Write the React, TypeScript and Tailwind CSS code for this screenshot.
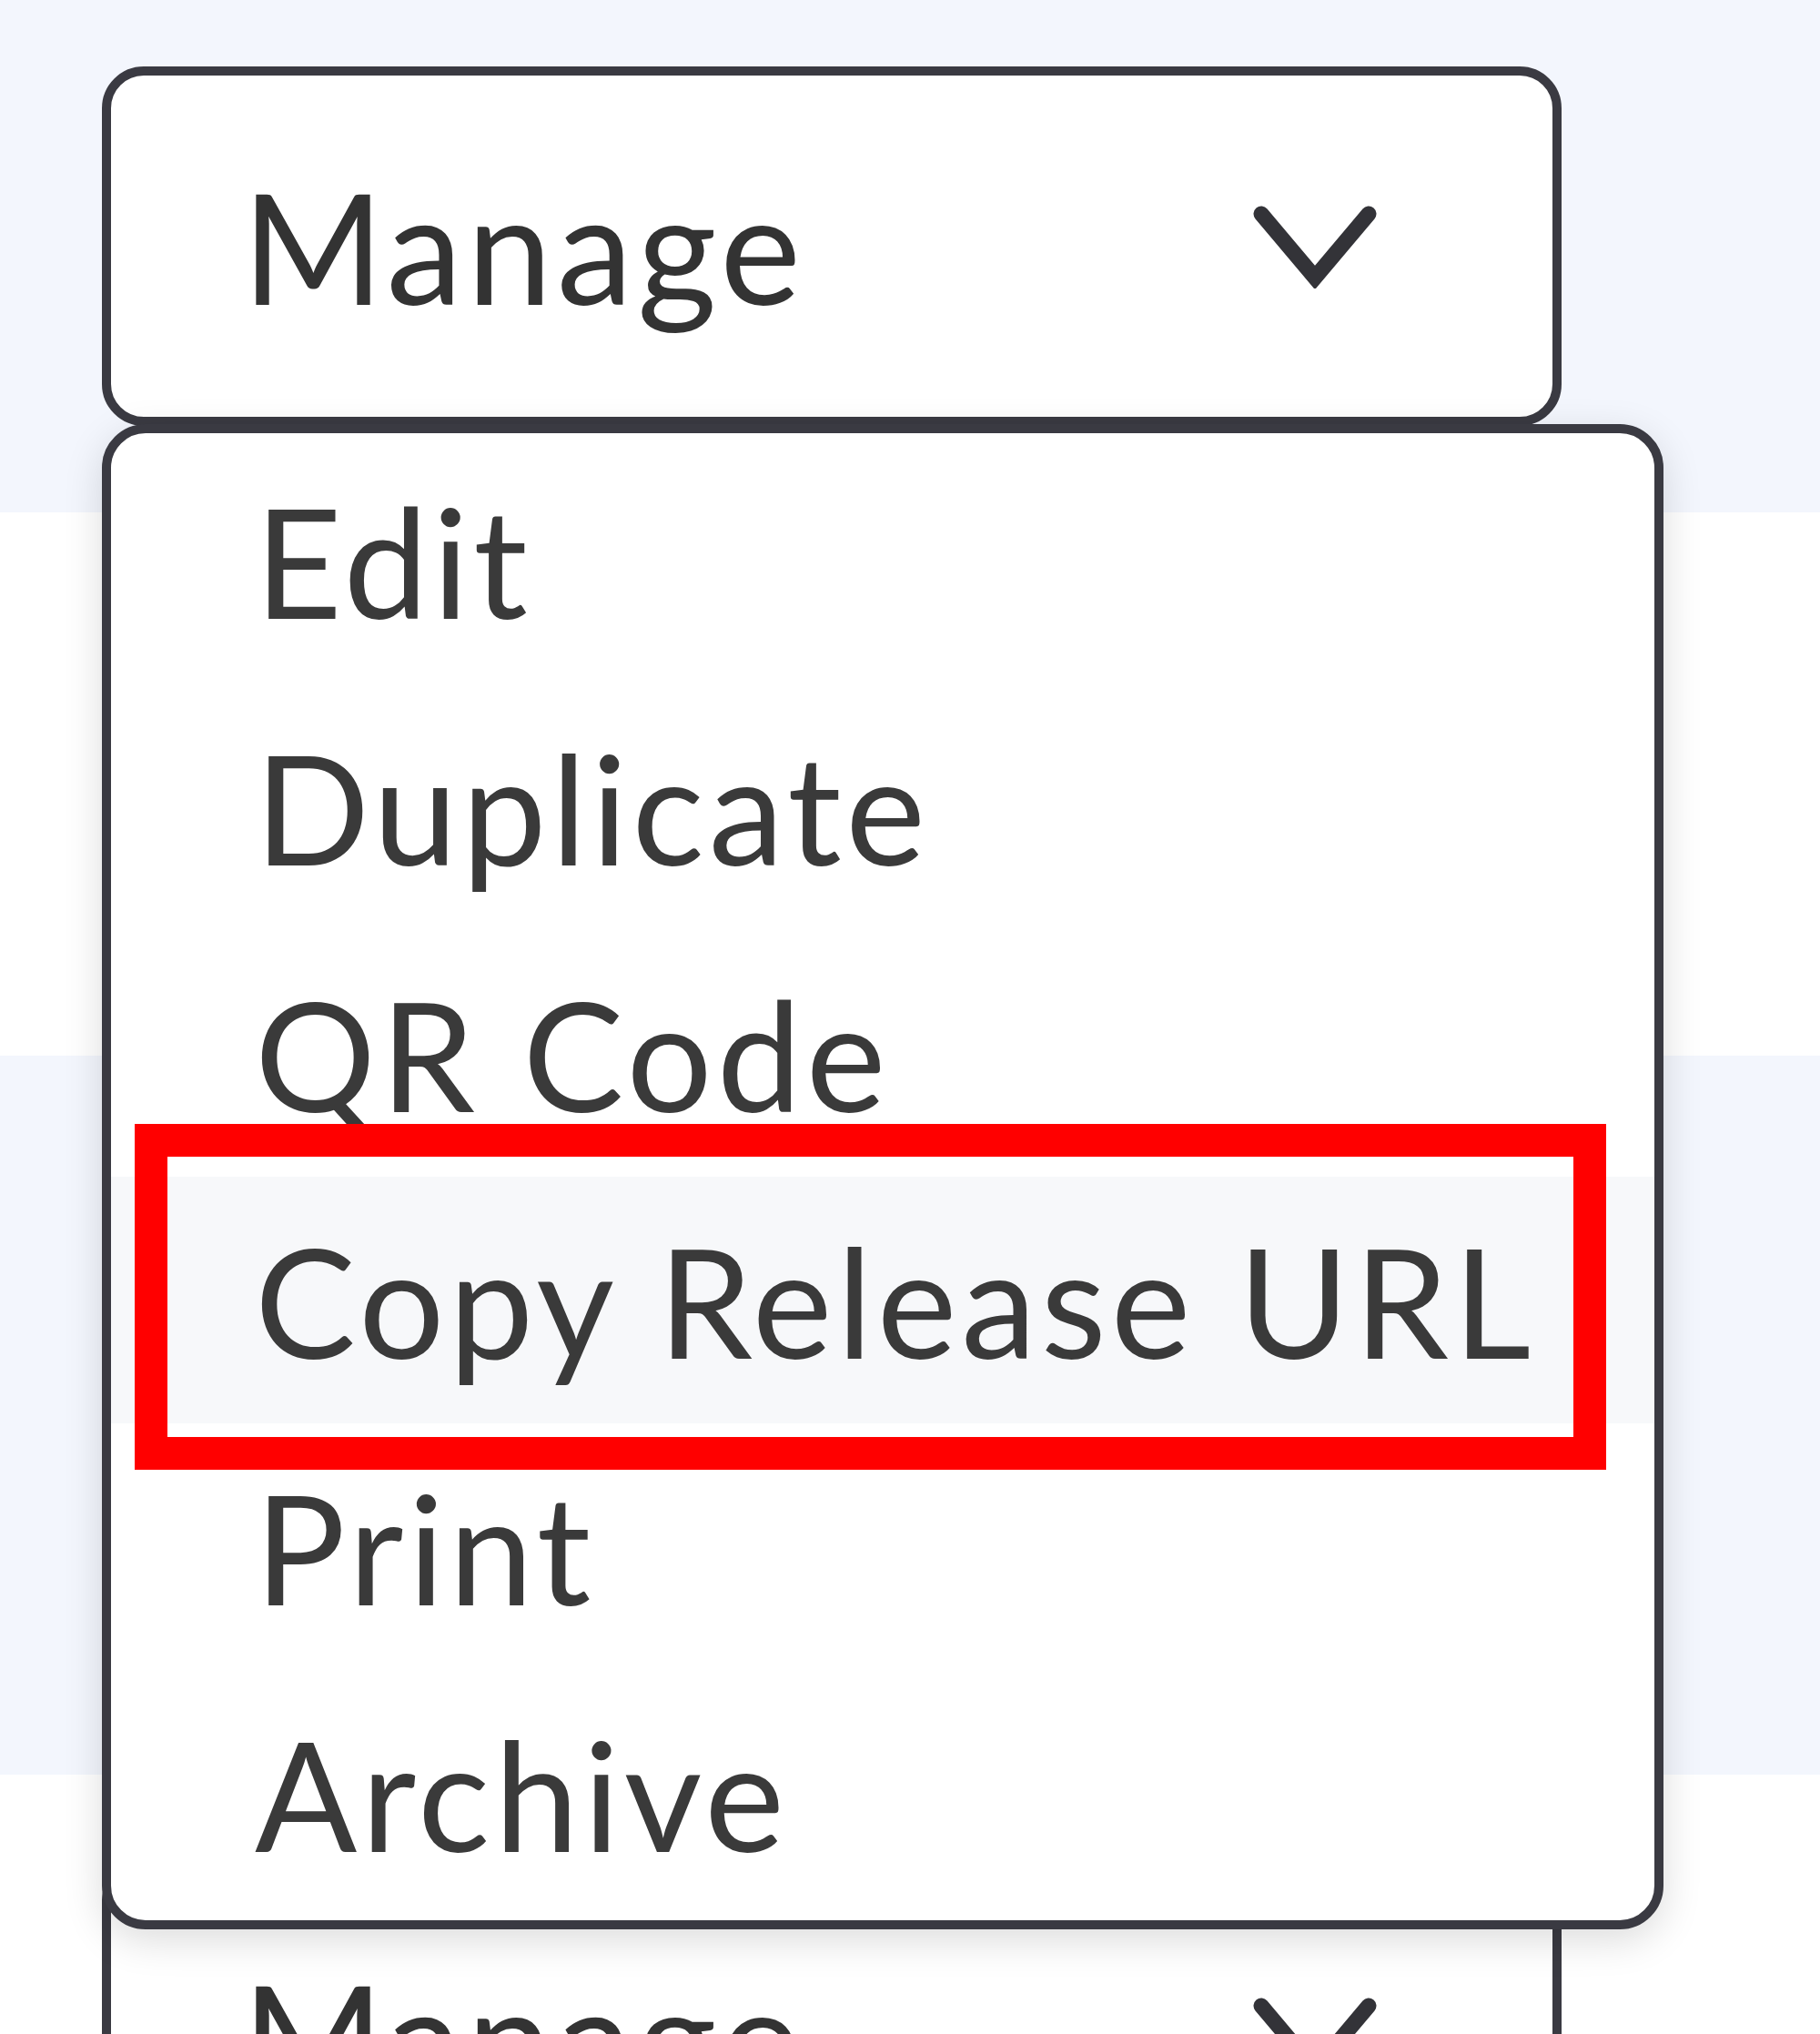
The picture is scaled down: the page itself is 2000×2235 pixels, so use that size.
import React from "react";

const items = ["Edit", "Duplicate", "QR Code", "Copy Release URL", "Print", "Archive"];

function Chevron() {
  return (
    <svg width="138" height="92" viewBox="0 0 138 92" fill="none">
      <polyline
        points="10,10 69,80 128,10"
        stroke="#333338"
        strokeWidth="17"
        strokeLinecap="round"
        strokeLinejoin="miter"
      />
    </svg>
  );
}

function ManageButton() {
  return (
    <button className="flex h-[395px] w-[1604px] items-center justify-between rounded-[46px] border-[10px] border-[#3a3a42] bg-white pl-[144px] pr-[192px] text-[168px] leading-none tracking-[5px] text-[#333333]">
      <span className="-mt-[2px]">Manage</span>
      <Chevron />
    </button>
  );
}

function Menu() {
  return (
    <div className="absolute left-0 top-[393px] z-10 w-[1716px] rounded-[48px] border-[10px] border-[#3a3a42] bg-white pb-[4px] pt-[4px] shadow-[0_12px_44px_rgba(0,0,0,0.14)]">
      <ul className="flex flex-col">
        {items.map((item) => (
          <li
            key={item}
            className={
              "h-[271px] pl-[158px] text-[166px] leading-[271px] tracking-[5px] text-[#3a3a3a] " +
              (item === "Copy Release URL" ? "bg-[#f7f8fa]" : "")
            }
          >
            {item}
          </li>
        ))}
      </ul>
      <div className="pointer-events-none absolute left-[26px] top-[759px] h-[380px] w-[1617px] border-[36px] border-[#ff0000]" />
    </div>
  );
}

export default function App() {
  return (
    <div className="h-[2235px] w-[2000px] overflow-hidden" style={{ fontFamily: "Lato, 'Open Sans', sans-serif" }}>
      <div className="h-[563px] bg-[#f3f6fd] pl-[112px] pt-[73px]">
        <div className="relative w-[1604px]">
          <ManageButton />
          <Menu />
        </div>
      </div>
      <div className="h-[597px] bg-white pl-[112px] pt-[100px]">
        <ManageButton />
      </div>
      <div className="h-[790px] bg-[#f3f6fd] pl-[112px] pt-[197px]">
        <ManageButton />
      </div>
      <div className="h-[585px] bg-white pl-[112px] pt-[92px]">
        <ManageButton />
      </div>
    </div>
  );
}
